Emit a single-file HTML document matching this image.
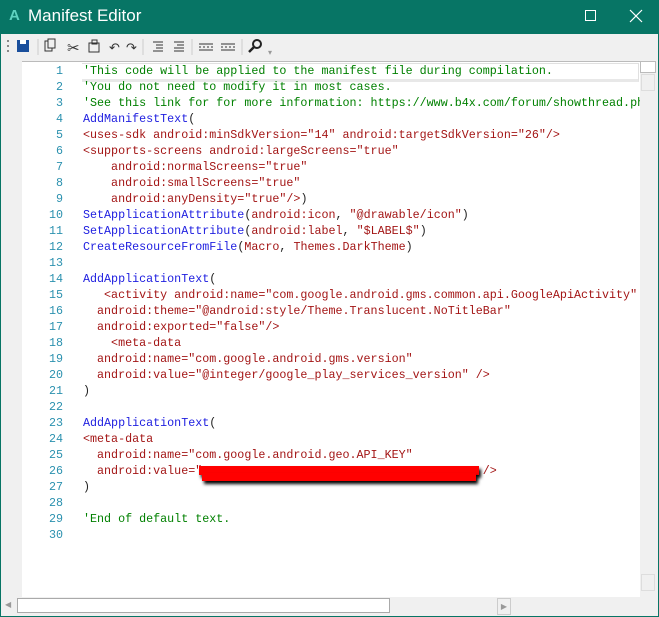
<!DOCTYPE html>
<html><head><style>
body{margin:0;width:659px;height:617px;overflow:hidden;background:#077565;font-family:"Liberation Sans",sans-serif;position:relative}
.title{position:absolute;left:0;top:0;width:659px;height:34px;color:#fff;}
.title .a{position:absolute;left:9px;top:7px;font-weight:bold;font-size:15px;color:#5fd3c0}
.title .t{position:absolute;left:28px;top:6px;font-size:17px}
.tb{position:absolute;left:1px;top:34px;width:657px;height:26px;background:#f0f0f0}
.ed{position:absolute;left:1px;top:60px;width:657px;height:556px;background:#f0f0f0}
.code{position:absolute;left:22px;top:61px;width:618px;height:535px;background:#fff;border-top:1px solid #bbb}
.ln{position:absolute;left:0;top:1px;width:41px;text-align:right;font-family:"Liberation Mono",monospace;font-size:11.7px;line-height:16px;color:#2b91af;white-space:pre}
.tx{position:absolute;left:61px;top:1px;font-family:"Liberation Mono",monospace;font-size:11.7px;line-height:16px;white-space:pre;color:#a31515}
.c{color:#008000}.k{color:#2020e0}.p{color:#222}
.hl{position:absolute;left:60px;top:1px;width:556px;height:15px;border:1px solid #e0e0e0;border-left:none;border-bottom:3px solid #e8e8e8}
.vs{position:absolute;left:640px;top:61px;width:17px;height:535px;background:#f0f0f0}
.hs{position:absolute;left:1px;top:597px;width:657px;height:18px;background:#f0f0f0}
</style></head><body>
<div class="title"><span class="a">A</span><span class="t">Manifest Editor</span>
<div style="position:absolute;left:585px;top:10px;width:9px;height:9px;border:1px solid #fff"></div>
<svg width="14" height="14" style="position:absolute;left:629px;top:9px"><path d="M1 1L13 13M13 1L1 13" stroke="#fff" stroke-width="1.2"/></svg></div>
<div class="tb">
<svg width="300" height="26" style="position:absolute;left:0;top:0">
<g fill="#888"><rect x="6" y="6" width="2" height="2"/><rect x="6" y="11" width="2" height="2"/><rect x="6" y="16" width="2" height="2"/></g>
<rect x="16" y="6" width="12" height="12" fill="#1a4f9c"/><rect x="19" y="6" width="6" height="4" fill="#fff"/>
<line x1="37" y1="5" x2="37" y2="21" stroke="#ccc"/>
<rect x="44" y="7" width="7" height="10" fill="none" stroke="#333"/><rect x="47" y="5" width="7" height="9" fill="#f0f0f0" stroke="#333"/>
<text x="66" y="19" font-size="15" fill="#333">✂</text>
<rect x="88" y="9" width="10" height="9" fill="none" stroke="#333"/><rect x="91" y="6" width="5" height="4" fill="none" stroke="#333"/>
<text x="108" y="18" font-size="13" fill="#333">↶</text><text x="125" y="18" font-size="13" fill="#333">↷</text>
<line x1="142" y1="5" x2="142" y2="21" stroke="#ccc"/>
<g stroke="#333"><line x1="152" y1="8" x2="162" y2="8"/><line x1="155" y1="11" x2="162" y2="11"/><line x1="155" y1="14" x2="162" y2="14"/><line x1="152" y1="17" x2="162" y2="17"/>
<line x1="173" y1="8" x2="183" y2="8"/><line x1="176" y1="11" x2="183" y2="11"/><line x1="173" y1="14" x2="183" y2="14"/><line x1="173" y1="17" x2="183" y2="17"/></g>
<line x1="191" y1="5" x2="191" y2="21" stroke="#ccc"/>
<g stroke="#333"><line x1="198" y1="10" x2="212" y2="10"/><line x1="198" y1="16" x2="212" y2="16"/><line x1="198" y1="13" x2="212" y2="13" stroke-dasharray="2 2"/>
<line x1="220" y1="10" x2="234" y2="10"/><line x1="220" y1="16" x2="234" y2="16"/><line x1="220" y1="13" x2="234" y2="13" stroke-dasharray="2 2"/></g>
<line x1="241" y1="5" x2="241" y2="21" stroke="#ccc"/>
<circle cx="256" cy="10" r="4" fill="none" stroke="#222" stroke-width="2"/><line x1="253" y1="13" x2="248" y2="18" stroke="#222" stroke-width="2.5"/>
<text x="267" y="21" font-size="8" fill="#999">▾</text>
</svg></div>
<div class="ed"></div>
<div class="code">
<div class="hl"></div>
<div class="ln">1
2
3
4
5
6
7
8
9
10
11
12
13
14
15
16
17
18
19
20
21
22
23
24
25
26
27
28
29
30</div>
<div class="tx"><span class="c">'This code will be applied to the manifest file during compilation.
'You do not need to modify it in most cases.
'See this link for for more information: https://www.b4x.com/forum/showthread.ph</span>
<span class="k">AddManifestText</span><span class="p">(</span>
&lt;uses-sdk android:minSdkVersion="14" android:targetSdkVersion="26"/&gt;
&lt;supports-screens android:largeScreens="true"
    android:normalScreens="true"
    android:smallScreens="true"
    android:anyDensity="true"/&gt;<span class="p">)</span>
<span class="k">SetApplicationAttribute</span><span class="p">(</span>android:icon<span class="p">, </span>"@drawable/icon"<span class="p">)</span>
<span class="k">SetApplicationAttribute</span><span class="p">(</span>android:label<span class="p">, </span>"$LABEL$"<span class="p">)</span>
<span class="k">CreateResourceFromFile</span><span class="p">(</span>Macro<span class="p">, </span>Themes.DarkTheme<span class="p">)</span>

<span class="k">AddApplicationText</span><span class="p">(</span>
   &lt;activity android:name="com.google.android.gms.common.api.GoogleApiActivity"
  android:theme="@android:style/Theme.Translucent.NoTitleBar"
  android:exported="false"/&gt;
    &lt;meta-data
  android:name="com.google.android.gms.version"
  android:value="@integer/google_play_services_version" /&gt;
<span class="p">)</span>

<span class="k">AddApplicationText</span><span class="p">(</span>
&lt;meta-data
  android:name="com.google.android.geo.API_KEY"
  android:value="                                        /&gt;
<span class="p">)</span>

<span class="c">'End of default text.</span>
</div>
<div style="position:absolute;left:177px;top:404px;width:280px;height:9px;background:#f00;box-shadow:2px 3px 3px #000"></div>
<div style="position:absolute;left:180px;top:411px;width:274px;height:8px;background:#f00;box-shadow:2px 3px 3px #000"></div>
</div>
<div class="vs"><div style="position:absolute;left:0;top:0;width:16px;height:12px;background:#fff;border:1px solid #bbb;box-sizing:border-box"></div>
<div style="position:absolute;left:1px;top:13px;width:14px;height:17px;border:1px solid #ddd;box-sizing:border-box"></div>
<div style="position:absolute;left:1px;top:513px;width:14px;height:17px;border:1px solid #ddd;box-sizing:border-box"></div></div>
<div class="hs"><div style="position:absolute;left:16px;top:1px;width:373px;height:15px;background:#fff;border:1px solid #aaa;box-sizing:border-box"></div>
<div style="position:absolute;left:4px;top:3px;font-size:8px;color:#999">◀</div>
<div style="position:absolute;left:496px;top:1px;width:12px;height:15px;border:1px solid #ccc;font-size:8px;color:#999;text-align:center;line-height:15px">▶</div></div>
</body></html>
